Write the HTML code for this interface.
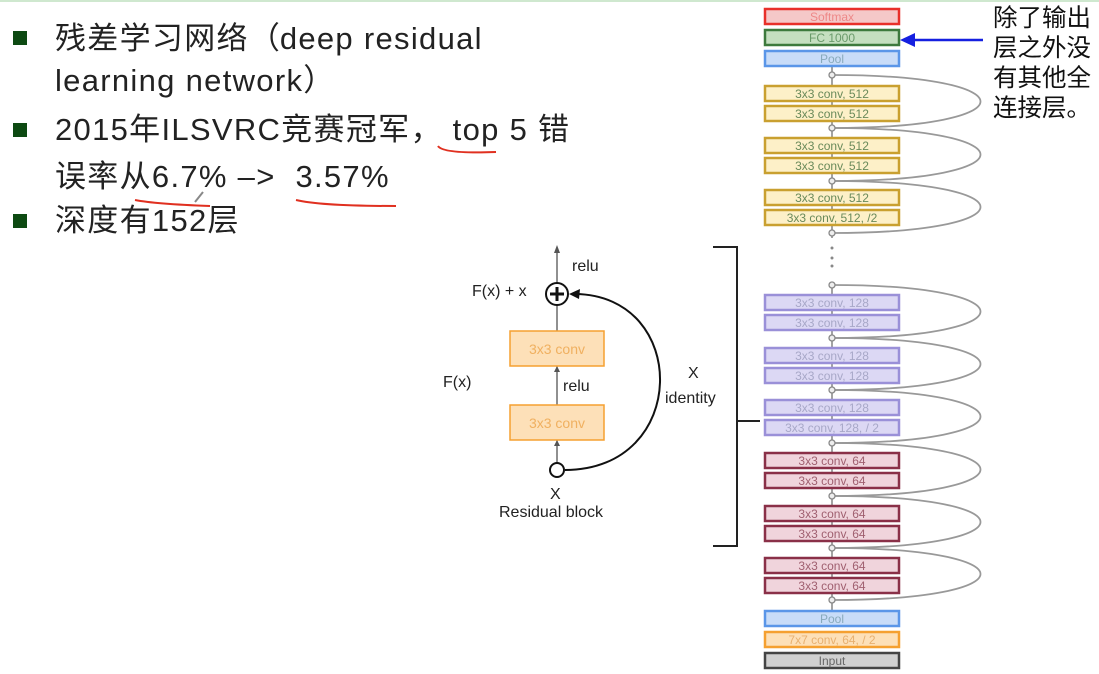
<!DOCTYPE html>
<html><head><meta charset="utf-8"><style>
body{margin:0;width:1099px;height:674px;background:#fff;overflow:hidden;position:relative;font-family:"Liberation Sans","Noto Sans CJK SC",sans-serif}
.t{position:absolute;left:55px;font-size:31px;color:#222;white-space:nowrap;line-height:40px;letter-spacing:1.3px}
.t span{font-family:"Noto Sans CJK SC",sans-serif;letter-spacing:0}
.b{position:absolute;left:13px;width:14px;height:14px;background:#0d4a12}
.r{position:absolute;left:993px;font-size:24.5px;line-height:30px;color:#111;top:4px}
</style></head><body>
<div style="position:absolute;left:0;top:0;width:1099px;height:2px;background:#cfe8cf"></div>
<div class="b" style="top:31px"></div>
<div class="t" style="top:16px">残差学习网络<span>（</span>deep residual</div>
<div class="t" style="top:58px">learning network<span>）</span></div>
<div class="b" style="top:123px"></div>
<div class="t" style="top:110px">2015年ILSVRC竞赛冠军， top 5 错</div>
<div class="t" style="top:157px">误率从6.7% –&gt;&nbsp; 3.57%</div>
<div class="b" style="top:214px"></div>
<div class="t" style="top:201px">深度有152层</div>
<div class="r">除了输出<br>层之外没<br>有其他全<br>连接层。</div>
<svg width="1099" height="674" style="position:absolute;left:0;top:0" font-family="Liberation Sans, sans-serif">
<g fill="none" stroke="#e03020" stroke-width="2">
<path d="M438 146 q5 8 58 6"/>
<path d="M135 200 q20 4 75 6"/>
<path d="M296 200 q25 6 100 6"/>
</g>
<path d="M203 192 l-8 10" stroke="#888" stroke-width="2"/>
<line x1="983" y1="40" x2="912" y2="40" stroke="#1520e0" stroke-width="2.5"/>
<polygon points="900,40 915,33 915,47" fill="#1520e0"/>
<g fill="none" stroke="#999" stroke-width="1.8">
<path d="M832 75 C1030 75 1030 128 832 128"/>
<path d="M832 128 C1030 128 1030 181 832 181"/>
<path d="M832 181 C1030 181 1030 233 832 233"/>
<path d="M832 285 C1030 285 1030 338 832 338"/>
<path d="M832 338 C1030 338 1030 390 832 390"/>
<path d="M832 390 C1030 390 1030 443 832 443"/>
<path d="M832 443 C1030 443 1030 496 832 496"/>
<path d="M832 496 C1030 496 1030 548 832 548"/>
<path d="M832 548 C1030 548 1030 600 832 600"/>
<line x1="832" y1="66" x2="832" y2="611"/>
</g>
<line x1="832" y1="238" x2="832" y2="282" stroke="#fff" stroke-width="4"/>
<g fill="#888"><circle cx="832" cy="248" r="1.5"/><circle cx="832" cy="258" r="1.5"/><circle cx="832" cy="266" r="1.5"/></g>
<g fill="#eee" stroke="#888" stroke-width="1.3">
<circle cx="832" cy="75" r="3"/><circle cx="832" cy="128" r="3"/><circle cx="832" cy="181" r="3"/><circle cx="832" cy="233" r="3"/><circle cx="832" cy="285" r="3"/><circle cx="832" cy="338" r="3"/><circle cx="832" cy="390" r="3"/><circle cx="832" cy="443" r="3"/><circle cx="832" cy="496" r="3"/><circle cx="832" cy="548" r="3"/><circle cx="832" cy="600" r="3"/></g>
<g stroke-width="2.5" font-size="12" text-anchor="middle">
<rect x="765" y="9" width="134" height="15" fill="#f5c8c8" stroke="#e8302a"/><text x="832" y="21" fill="#e88" stroke="none">Softmax</text>
<rect x="765" y="30" width="134" height="15" fill="#c5dfc0" stroke="#3d7a3d"/><text x="832" y="42" fill="#6a9a6a" stroke="none">FC 1000</text>
<rect x="765" y="51" width="134" height="15" fill="#c8dcf8" stroke="#5a96e8"/><text x="832" y="63" fill="#8ab" stroke="none">Pool</text>
<g fill="#fdf0c8" stroke="#c9a030">
<rect x="765" y="86" width="134" height="15"/><rect x="765" y="106" width="134" height="15"/>
<rect x="765" y="138" width="134" height="15"/><rect x="765" y="158" width="134" height="15"/>
<rect x="765" y="190" width="134" height="15"/><rect x="765" y="210" width="134" height="15"/></g>
<g fill="#6a8a5a" stroke="none">
<text x="832" y="98">3x3 conv, 512</text><text x="832" y="118">3x3 conv, 512</text>
<text x="832" y="150">3x3 conv, 512</text><text x="832" y="170">3x3 conv, 512</text>
<text x="832" y="202">3x3 conv, 512</text><text x="832" y="222">3x3 conv, 512, /2</text></g>
<g fill="#dcd8f4" stroke="#9a90d8">
<rect x="765" y="295" width="134" height="15"/><rect x="765" y="315" width="134" height="15"/>
<rect x="765" y="348" width="134" height="15"/><rect x="765" y="368" width="134" height="15"/>
<rect x="765" y="400" width="134" height="15"/><rect x="765" y="420" width="134" height="15"/></g>
<g fill="#a8a8c8" stroke="none">
<text x="832" y="307">3x3 conv, 128</text><text x="832" y="327">3x3 conv, 128</text>
<text x="832" y="360">3x3 conv, 128</text><text x="832" y="380">3x3 conv, 128</text>
<text x="832" y="412">3x3 conv, 128</text><text x="832" y="432">3x3 conv, 128, / 2</text></g>
<g fill="#f0d4dc" stroke="#8a3048">
<rect x="765" y="453" width="134" height="15"/><rect x="765" y="473" width="134" height="15"/>
<rect x="765" y="506" width="134" height="15"/><rect x="765" y="526" width="134" height="15"/>
<rect x="765" y="558" width="134" height="15"/><rect x="765" y="578" width="134" height="15"/></g>
<g fill="#a06070" stroke="none">
<text x="832" y="465">3x3 conv, 64</text><text x="832" y="485">3x3 conv, 64</text>
<text x="832" y="518">3x3 conv, 64</text><text x="832" y="538">3x3 conv, 64</text>
<text x="832" y="570">3x3 conv, 64</text><text x="832" y="590">3x3 conv, 64</text></g>
<rect x="765" y="611" width="134" height="15" fill="#c8dcf8" stroke="#5a96e8"/><text x="832" y="623" fill="#8ab" stroke="none">Pool</text>
<rect x="765" y="632" width="134" height="15" fill="#fde0b8" stroke="#f5a030"/><text x="832" y="644" fill="#e8b070" stroke="none">7x7 conv, 64, / 2</text>
<rect x="765" y="653" width="134" height="15" fill="#d0d0d0" stroke="#444"/><text x="832" y="665" fill="#666" stroke="none">Input</text>
</g>
<path d="M713 247 H737 V546 H713 M737 421 H760" fill="none" stroke="#222" stroke-width="2"/>
<g stroke="#555" stroke-width="1.3" fill="none">
<line x1="557" y1="283" x2="557" y2="250"/><line x1="557" y1="305" x2="557" y2="331"/>
<line x1="557" y1="366" x2="557" y2="405"/><line x1="557" y1="440" x2="557" y2="463"/>
</g>
<g fill="#555"><polygon points="557,245 554,253 560,253"/><polygon points="557,366 554,372 560,372"/><polygon points="557,440 554,446 560,446"/></g>
<rect x="510" y="331" width="94" height="35" fill="#fde0b8" stroke="#f5a030" stroke-width="1.5"/>
<rect x="510" y="405" width="94" height="35" fill="#fde0b8" stroke="#f5a030" stroke-width="1.5"/>
<text x="557" y="354" font-size="14" fill="#f0b060" text-anchor="middle">3x3 conv</text>
<text x="557" y="428" font-size="14" fill="#f0b060" text-anchor="middle">3x3 conv</text>
<path d="M565 470 C690 470 690 295 575 294" fill="none" stroke="#111" stroke-width="2"/>
<polygon points="569,294 580,289 579,299" fill="#111"/>
<circle cx="557" cy="294" r="11" fill="#fff" stroke="#111" stroke-width="2"/>
<path d="M550 294 H564 M557 287 V301" stroke="#111" stroke-width="3"/>
<circle cx="557" cy="470" r="7" fill="#fff" stroke="#111" stroke-width="2"/>
<g font-size="16" fill="#222">
<text x="572" y="271">relu</text>
<text x="472" y="296">F(x) + x</text>
<text x="443" y="387">F(x)</text>
<text x="563" y="391">relu</text>
<text x="688" y="378">X</text>
<text x="665" y="403">identity</text>
<text x="550" y="499">X</text>
<text x="499" y="517">Residual block</text>
</g>
</svg>
</body></html>
